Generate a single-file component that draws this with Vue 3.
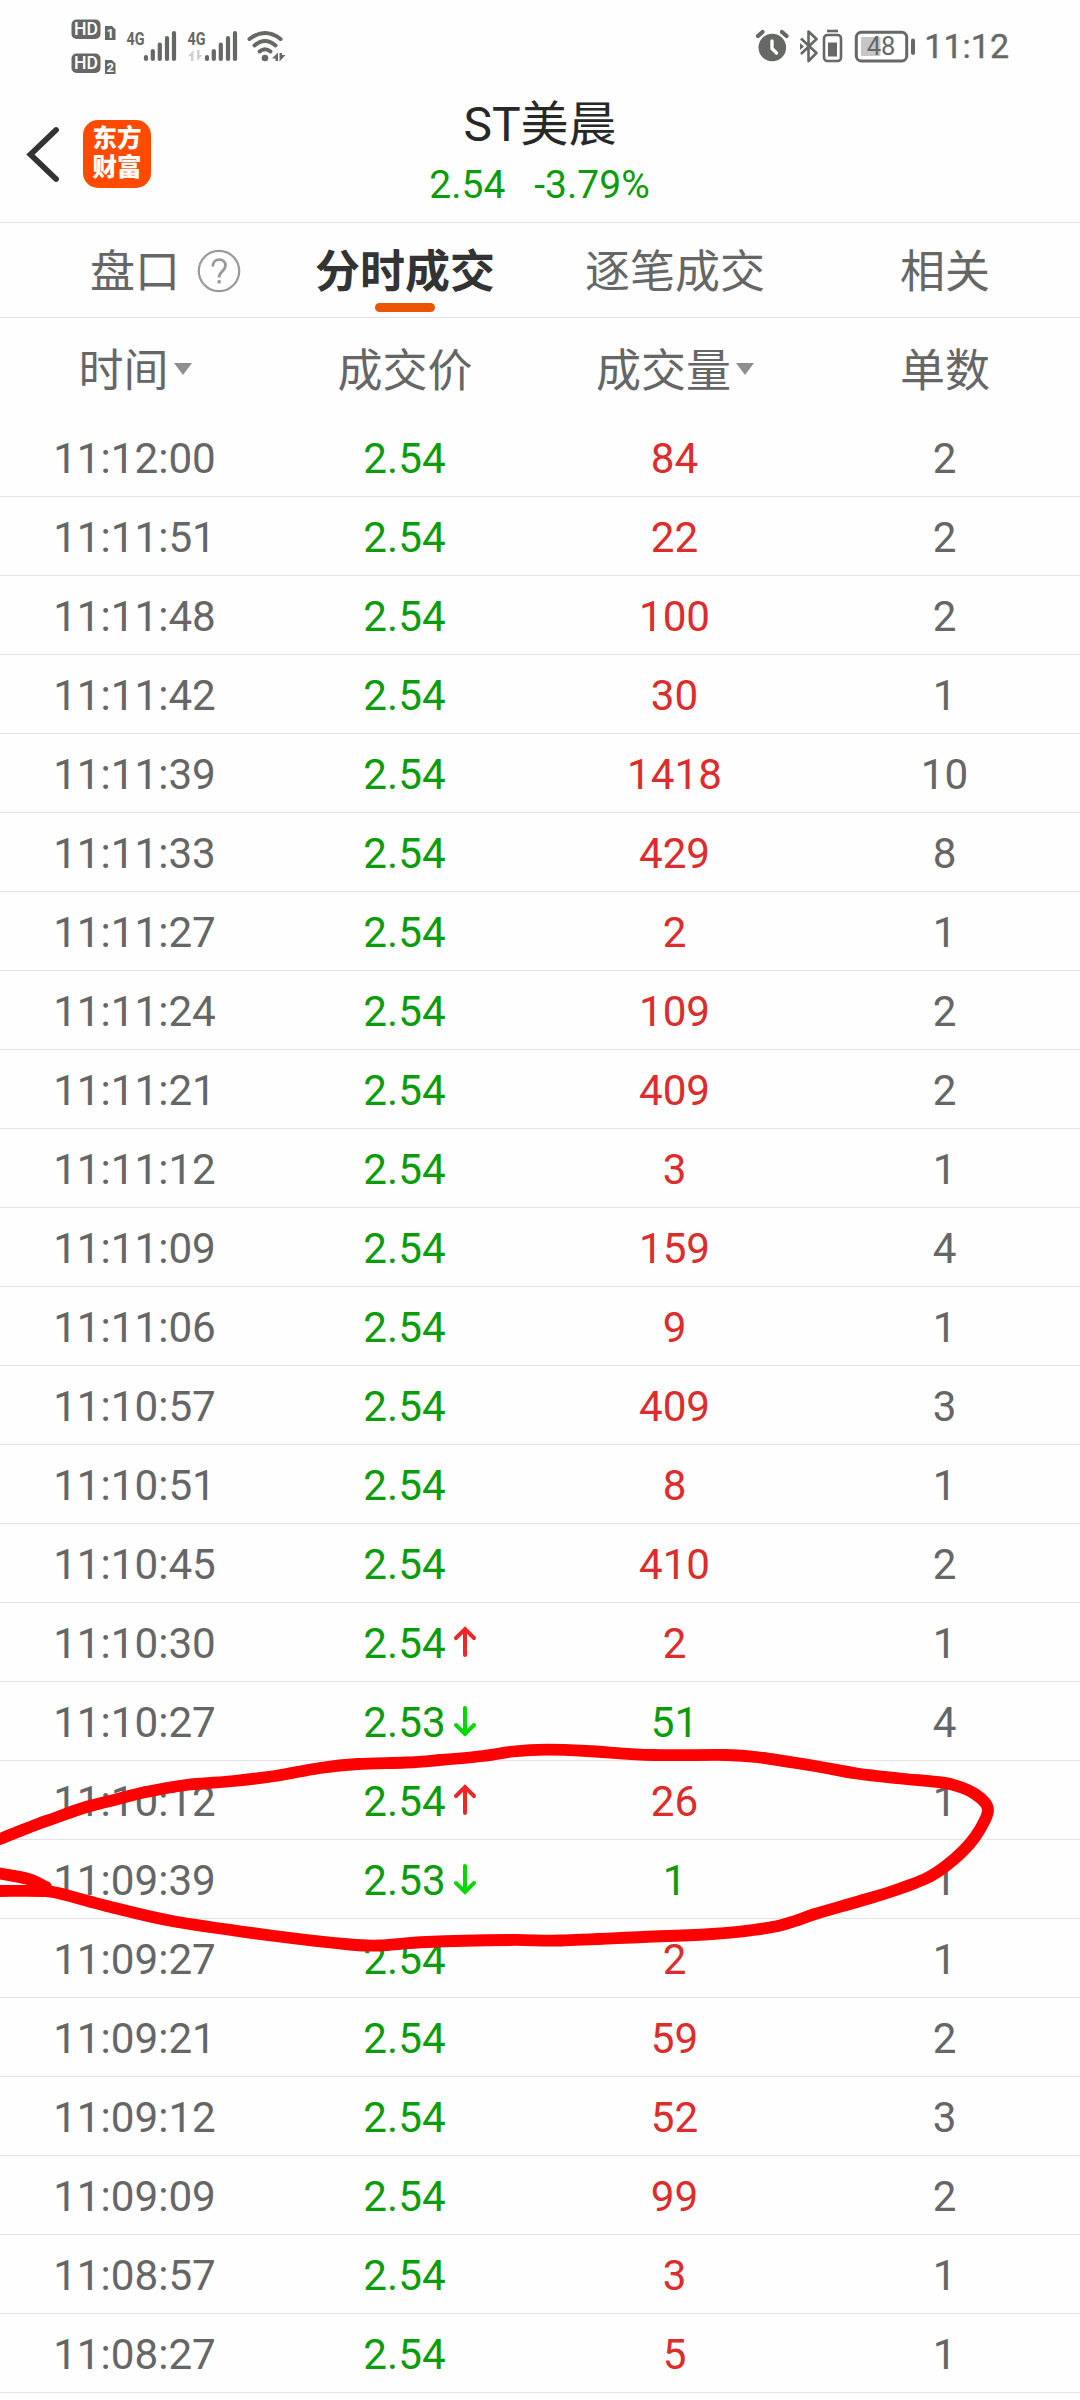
<template>
  <div class="trade-page">
    <div class="status-bar">
      <svg class="status-bar__left" width="224" height="62" viewBox="68 16 224 62">
        <g v-for="sim in sims" :key="sim.no" :transform="`translate(0 ${sim.y})`">
          <rect x="71.5" y="19.500" width="29" height="19.5" rx="5" fill="#666866" />
          <text x="86" y="35.4" class="status-bar__hd" text-anchor="middle" textLength="24" lengthAdjust="spacingAndGlyphs">HD</text>
          <path d="M105 26h7l3.5 3.5V40H105z" fill="#666866" />
          <text x="110.2" y="38" class="status-bar__sim" text-anchor="middle">{{ sim.no }}</text>
        </g>
        <g v-for="offset in [0, 61]" :key="offset" :transform="`translate(${offset} 0)`">
          <text x="126.5" y="44.5" class="status-bar__net" textLength="18" lengthAdjust="spacingAndGlyphs">4G</text>
          <path
            d="M146 57v2M152.8 51v8M159.8 44.5V59M167 38v21M174 33v26"
            stroke="#666866"
            stroke-width="4.2"
            stroke-linecap="round"
          />
        </g>
        <path d="M188 56l5.5-6v11h-2.500v-5zM202.500 55l-5.500 6V50h2.500v5z" fill="#d2d0d2" />
        <g fill="none" stroke="#666866" stroke-width="4" stroke-linecap="round">
          <path d="M249.500 39Q265 27 280.500 39" />
          <path d="M254.500 45.500Q265 36.500 275.500 45.500" />
          <path d="M259.500 51.500Q265 47 270.500 51.500" />
        </g>
        <circle cx="265" cy="58" r="3.300" fill="#666866" />
        <path d="M272 58.500l6-6V61h-2.500v-2.500zM285.500 55l-6 6.500V53h2.500v2z" fill="#666866" />
      </svg>

      <div class="status-bar__right">
        <svg width="162" height="36" viewBox="754 28 162 36">
          <circle cx="772.300" cy="47.500" r="13.800" fill="#666866" />
          <path d="M772 41v7.500l4.500 4.500" fill="none" stroke="#fefefe" stroke-width="3.400" stroke-linecap="round" />
          <path d="M758 36l4.500-4M786.500 36l-4.500-4" stroke="#666866" stroke-width="4.200" stroke-linecap="round" />
          <path
            d="M801 38.500l15.500 14.500-8 8V31.500l8 7.500L801 54"
            fill="none"
            stroke="#666866"
            stroke-width="2.600"
            stroke-linejoin="round"
          />
          <path d="M800 43l4 3.500-4 3.500z" fill="#666866" />
          <path d="M827 31h11" stroke="#666866" stroke-width="2.600" />
          <rect x="824" y="35" width="17" height="26" rx="3.500" fill="none" stroke="#666866" stroke-width="2.600" />
          <rect x="828" y="42.500" width="9" height="14" fill="#666866" />
          <rect x="856.300" y="32.300" width="50.400" height="28.700" rx="5" fill="none" stroke="#666866" stroke-width="3" />
          <rect x="861" y="37" width="19.500" height="19" rx="1.500" fill="#c8c5c9" />
          <rect x="911" y="38.500" width="4" height="16.500" rx="2" fill="#666866" />
          <text x="881" y="55.200" class="status-bar__power" text-anchor="middle">48</text>
        </svg>
        <span class="status-bar__time">11:12</span>
      </div>
    </div>

    <header class="stock-header">
      <div class="stock-header__side">
        <svg width="36" height="60" viewBox="24 124 36 60">
          <path d="M56 130L30.500 154.500L56 179" fill="none" stroke="#333" stroke-width="5.800" stroke-linecap="round" />
        </svg>
        <div class="stock-header__logo">
          <span>东方</span>
          <span>财富</span>
        </div>
      </div>
      <div class="stock-header__main">
        <div class="stock-header__name">ST美晨</div>
        <div class="stock-header__quote">
          <span>2.54</span>
          <span>-3.79%</span>
        </div>
      </div>
      <div class="stock-header__side" />
    </header>

    <nav class="tabs">
      <div v-for="tab in tabs" :key="tab" class="tabs__item" :class="{ 'tabs__item--active': tab === activeTab }" @click="activeTab = tab">
        <span class="tabs__label">
          {{ tab }}
          <svg v-if="tab === '盘口'" class="tabs__help" width="44" height="44" viewBox="0 0 44 44" fill="none" stroke="#999">
            <circle cx="22" cy="22" r="20.200" stroke-width="2.200" />
            <path d="M15.800 17.500c0-4.500 2.700-6.800 6.400-6.800s6.300 2.400 6.300 5.900c0 5-6.400 6-6.400 11.900" stroke-width="2.800" />
            <path d="M20.500 32.800h3.300" stroke-width="3.200" />
          </svg>
        </span>
      </div>
    </nav>

    <div class="trade-row trade-row--head">
      <div v-for="column in columns" :key="column.label" class="trade-row__cell">
        {{ column.label }}
        <svg v-if="column.sortable" class="trade-row__sort" width="18" height="12" viewBox="0 0 18 12">
          <path d="M0 0h18L9 12z" fill="#8e8e93" />
        </svg>
      </div>
    </div>

    <div class="trade-list">
      <div v-for="item in trades" :key="item.time" class="trade-row">
        <div class="trade-row__cell">{{ item.time }}</div>
        <div class="trade-row__cell trade-row__cell--down">
          <span class="trade-row__price">
            {{ item.price }}
            <svg v-if="item.trend" class="trade-row__trend" width="24" height="32" viewBox="0 0 24 32">
              <path
                :d="item.trend === 'up' ? 'M12 29V3M3 12l9-9 9 9' : 'M12 3v26M3 20l9 9 9-9'"
                :stroke="item.trend === 'up' ? '#f02626' : '#00d900'"
                fill="none"
                stroke-width="4"
                stroke-linecap="round"
              />
            </svg>
          </span>
        </div>
        <div class="trade-row__cell" :class="item.trend === 'down' ? 'trade-row__cell--down' : 'trade-row__cell--up'">{{ item.volume }}</div>
        <div class="trade-row__cell">{{ item.count }}</div>
      </div>
    </div>

    <svg class="marker" width="1080" height="220" viewBox="0 1740 1080 220">
      <path v-for="(stroke, index) in markerPaths" :key="index" :d="stroke" />
    </svg>
  </div>
</template>

<script setup>
import { ref } from 'vue'

const sims = [
  { no: 1, y: 0 },
  { no: 2, y: 34 }
]

const tabs = ['盘口', '分时成交', '逐笔成交', '相关']
const activeTab = ref('分时成交')

const columns = [
  { label: '时间', sortable: true },
  { label: '成交价' },
  { label: '成交量', sortable: true },
  { label: '单数' }
]

const trades = [
  ['11:12:00', '2.54', 84, 2],
  ['11:11:51', '2.54', 22, 2],
  ['11:11:48', '2.54', 100, 2],
  ['11:11:42', '2.54', 30, 1],
  ['11:11:39', '2.54', 1418, 10],
  ['11:11:33', '2.54', 429, 8],
  ['11:11:27', '2.54', 2, 1],
  ['11:11:24', '2.54', 109, 2],
  ['11:11:21', '2.54', 409, 2],
  ['11:11:12', '2.54', 3, 1],
  ['11:11:09', '2.54', 159, 4],
  ['11:11:06', '2.54', 9, 1],
  ['11:10:57', '2.54', 409, 3],
  ['11:10:51', '2.54', 8, 1],
  ['11:10:45', '2.54', 410, 2],
  ['11:10:30', '2.54', 2, 1, 'up'],
  ['11:10:27', '2.53', 51, 4, 'down'],
  ['11:10:12', '2.54', 26, 1, 'up'],
  ['11:09:39', '2.53', 1, 1, 'down'],
  ['11:09:27', '2.54', 2, 1],
  ['11:09:21', '2.54', 59, 2],
  ['11:09:12', '2.54', 52, 3],
  ['11:09:09', '2.54', 99, 2],
  ['11:08:57', '2.54', 3, 1],
  ['11:08:27', '2.54', 5, 1]
].map(([time, price, volume, count, trend]) => ({ time, price, volume, count, trend }))

const markerStrokes = [
  [
    [-12, 1843], [0, 1839], [20, 1831], [38, 1824], [55, 1818], [83, 1808], [114, 1800], [146, 1792],
    [186, 1785], [234, 1781], [275, 1776], [320, 1768], [358, 1764], [406, 1762.500], [440, 1760], [483, 1756],
    [513, 1751.500], [547, 1749.700], [587, 1751], [653, 1755], [726, 1755], [760, 1757.500], [815, 1766], [857, 1773.500],
    [900, 1778.500], [943, 1782.700], [963, 1788], [975, 1794], [985, 1802.500], [988, 1810], [985, 1820], [975, 1837],
    [963, 1851], [947, 1865], [927, 1878], [893, 1891], [860, 1901],
    [815, 1914], [795, 1921], [778, 1926], [753, 1930], [712, 1934], [643, 1937], [561, 1940.500],
    [510, 1940], [427, 1942], [379, 1945.500], [350, 1944.500], [275, 1936], [172, 1921], [103, 1905],
    [58, 1893], [41, 1891], [0, 1891], [-12, 1891]
  ],
  [[-12, 1871], [0, 1873.500], [28, 1879], [46, 1887]]
]

// Catmull-Rom spline through the points, written as cubic segments
function toPath(points) {
  let d = `M${points[0][0]} ${points[0][1]}`
  for (let i = 0; i < points.length - 1; i++) {
    const p0 = points[i - 1] || points[i]
    const p1 = points[i]
    const p2 = points[i + 1]
    const p3 = points[i + 2] || p2
    d += `C${p1[0] + (p2[0] - p0[0]) / 6} ${p1[1] + (p2[1] - p0[1]) / 6}`
    d += ` ${p2[0] - (p3[0] - p1[0]) / 6} ${p2[1] - (p3[1] - p1[1]) / 6} ${p2[0]} ${p2[1]}`
  }
  return d
}

const markerPaths = markerStrokes.map(toPath)
</script>

<style>
body {
  margin: 0;
  background: #fefefe;
}
</style>

<style scoped>
.trade-page {
  position: relative;
  width: 1080px;
  height: 2400px;
  overflow: hidden;
  background: #fefefe;
  color: #666;
  font-family: Roboto, "Noto Sans CJK SC", sans-serif;
}

.status-bar {
  display: flex;
  justify-content: space-between;
  align-items: flex-start;
  box-sizing: border-box;
  height: 92px;
  padding: 16px 71px 0 68px;
}

.status-bar__hd {
  fill: #fefefe;
  font-size: 18px;
  font-weight: 500;
}

.status-bar__sim {
  fill: #fefefe;
  font-size: 13px;
  font-weight: 700;
}

.status-bar__net {
  fill: #666866;
  font-size: 19px;
  font-weight: 700;
}

.status-bar__power {
  fill: #666866;
  font-size: 25.500px;
}

.status-bar__right {
  display: flex;
  align-items: center;
  gap: 8px;
  padding-top: 11px;
}

.status-bar__time {
  color: #666866;
  font-size: 34px;
  line-height: 38px;
  -webkit-text-stroke: 0.4px #666866;
}

.stock-header {
  display: grid;
  grid-template-columns: 270px 540px 270px;
  height: 130px;
  border-bottom: 1px solid #e3e3e3;
}

.stock-header__side {
  display: flex;
  align-items: center;
  gap: 23px;
  height: 124px;
  padding-left: 24px;
}

.stock-header__logo {
  display: flex;
  flex-direction: column;
  justify-content: center;
  align-items: center;
  box-sizing: border-box;
  width: 68px;
  height: 68px;
  padding-bottom: 2px;
  border-radius: 15px;
  background: #ff4a00;
  color: #fff;
  font-size: 24.500px;
  font-weight: 900;
  line-height: 29px;
}

.stock-header__main {
  text-align: center;
}

.stock-header__name {
  margin-top: 1px;
  color: #282828;
  font-size: 48px;
  line-height: 64px;
}

.stock-header__quote {
  display: flex;
  justify-content: center;
  gap: 29px;
  padding-right: 1px;
  color: #0a9c0a;
  font-size: 39px;
  line-height: 56px;
}

.tabs {
  display: grid;
  grid-template-columns: repeat(4, 1fr);
  height: 94px;
  border-bottom: 1px solid #e3e3e3;
}

.tabs__item {
  position: relative;
  display: flex;
  justify-content: center;
  align-items: center;
  box-sizing: border-box;
  padding-bottom: 3px;
  font-size: 45px;
}

.tabs__label {
  position: relative;
  white-space: nowrap;
}

.tabs__item--active {
  color: #333;
  font-weight: 700;
}

.tabs__item--active::after {
  content: '';
  position: absolute;
  bottom: 5px;
  left: 105px;
  width: 60px;
  height: 9px;
  border-radius: 5px;
  background: #ea5504;
}

.tabs__help {
  position: absolute;
  top: 50%;
  left: 100%;
  margin: -20px 0 0 17px;
}

.trade-row {
  display: grid;
  grid-template-columns: repeat(4, 1fr);
  box-sizing: border-box;
  height: 79px;
  padding-top: 2px;
  border-bottom: 1px solid #e3e3e3;
  font-size: 42.200px;
}

.trade-row--head {
  height: 100px;
  padding: 0 0 1px;
  border-bottom: none;
  font-size: 45px;
}

.trade-row__cell {
  display: flex;
  justify-content: center;
  align-items: center;
}

.trade-list .trade-row__cell {
  padding-right: 1px;
}

.trade-row__cell--up {
  color: #dc2c2c;
}

.trade-row__cell--down {
  color: #0a9c0a;
}

.trade-row__sort {
  margin: 3px 0 0 5px;
}

.trade-row__price {
  position: relative;
}

.trade-row__trend {
  position: absolute;
  top: 50%;
  left: 100%;
  margin: -17px 0 0 7px;
}

.marker {
  position: absolute;
  top: 1740px;
  left: 0;
  pointer-events: none;
}

.marker path {
  fill: none;
  stroke: #f00;
  stroke-width: 11.800px;
  stroke-linecap: round;
  stroke-linejoin: round;
}
</style>
